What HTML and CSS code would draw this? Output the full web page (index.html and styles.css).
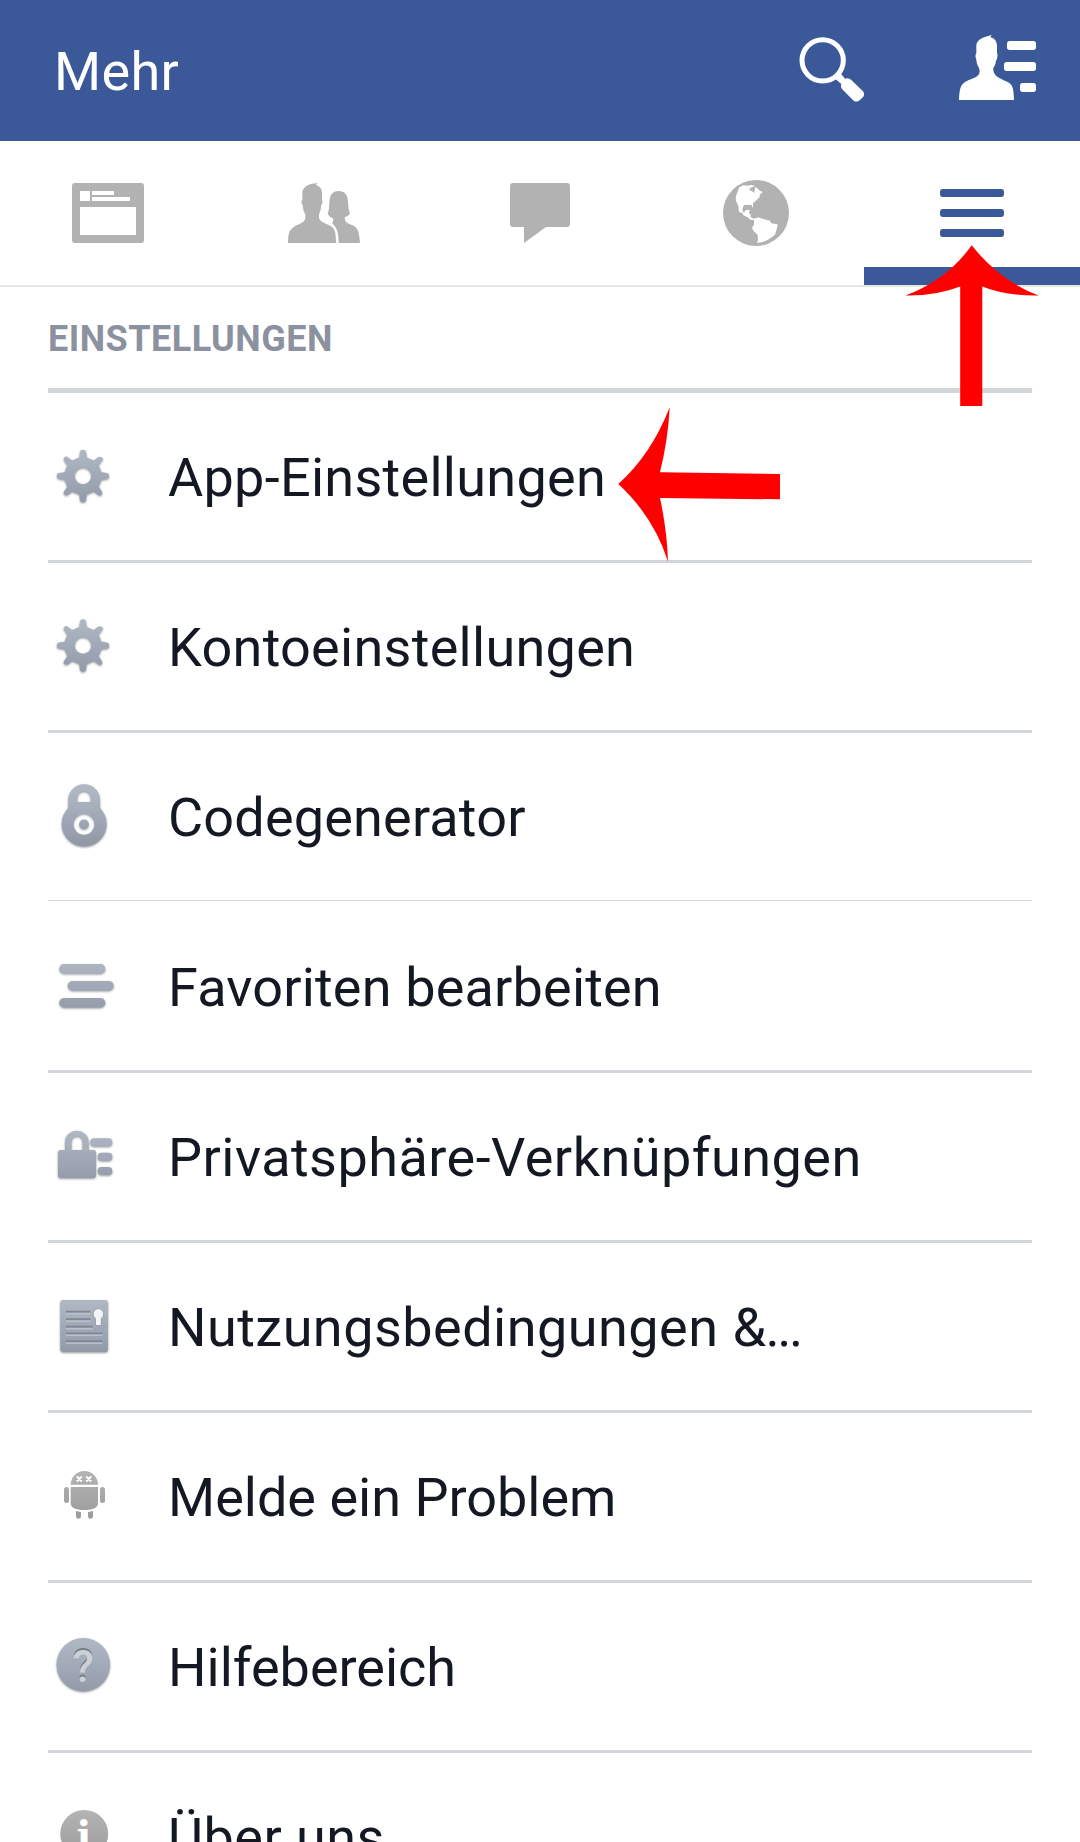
FILE: index.html
```html
<!DOCTYPE html>
<html lang="de">
<head>
<meta charset="utf-8">
<title>Mehr</title>
<link rel="stylesheet" href="styles.css">
</head>
<body>
<svg class="defs" width="0" height="0" aria-hidden="true">
  <defs>
    <linearGradient id="steel" gradientUnits="userSpaceOnUse" x1="0" y1="8" x2="0" y2="62">
      <stop offset="0" stop-color="#afb8c2"/><stop offset=".55" stop-color="#a0a8b7"/><stop offset="1" stop-color="#9299a6"/>
    </linearGradient>
    <linearGradient id="gray" gradientUnits="userSpaceOnUse" x1="0" y1="8" x2="0" y2="58">
      <stop offset="0" stop-color="#b4b4b4"/><stop offset="1" stop-color="#9b9b9b"/>
    </linearGradient>
    <mask id="hub" maskUnits="userSpaceOnUse" x="0" y="0" width="72" height="72">
      <rect width="72" height="72" fill="#fff"/><circle cx="35" cy="35" r="8.300"/>
    </mask>
    <path id="gear" mask="url(#hub)" d="M31.300 16.500L32 11Q32.300 8.800 35 8.800T38 11L38.700 16.500L45.800 19.400L50.200 16.200Q52.200 15 54 16.500T53.800 19.800L50.600 24.200L53.500 31.300L59 32Q61.200 32.300 61.200 35T59 38L53.500 38.700L50.600 45.800L53.800 50.200Q55 52.200 53.500 53.800T50.200 53.800L45.800 50.600L38.700 53.500L38 59Q37.700 61.200 35 61.200T32 59L31.300 53.500L24.200 50.600L19.800 53.800Q17.800 55 16.300 53.500T16.200 50.200L19.400 45.800L16.500 38.700L11 38Q8.800 37.700 8.800 35T11 32L16.500 31.300L19.400 24.200L16.200 19.800Q15 17.800 16.500 16.300T19.800 16.200L24.200 19.400z"/>
  </defs>
</svg>
<div class="screen">
  <header class="bar">
    <h1 class="title">Mehr</h1>
    <svg class="search" viewBox="116 109 198 195">
      <circle cx="187" cy="179" r="62" fill="none" stroke="#fff" stroke-width="15"/>
      <path fill="#fff" d="M226 236L242 219L254 234Q266 231 273 238L308 272Q314 280 309 288L298 299Q289 306 280 300L245 265Q240 258 243 250z"/>
    </svg>
    <svg class="contacts" viewBox="597 105 234 195" fill="#fff">
      <path d="M597 300C598 270 601 258 611 249C624 238 655 234 658 220Q660 212 657 203C651 195 650 187 649 180Q645 173 647 163L649 160V138C649 122 664 112 695 105L691 112C704 115 711 123 711 140V160Q714 163 712 170Q712 178 708 182C707 192 704 198 700 203V212C704 234 732 238 748 249C760 258 761 272 762 300z"/>
      <rect x="741" y="123" width="87" height="27" rx="8"/><rect x="732" y="186" width="96" height="27" rx="8"/><rect x="780" y="249" width="48" height="27" rx="8"/>
    </svg>
  </header>
  <nav class="tabs">
    <div class="tab"><svg width="72" height="60" viewBox="0 0 72 60"><path fill-rule="evenodd" d="M3 0H69Q72 0 72 3V57Q72 60 69 60H3Q0 60 0 57V3Q0 0 3 0zM8 8V18H18V8zM20 8V12H42V8zM20 14V18H58V14zM8 24V52H64V24z"/></svg></div>
    <div class="tab"><svg width="72" height="60" viewBox="864 549 216 180">
      <path d="M864 729C865 700 867 692 880 682C895 672 914 669 916 655V643C909 632 909 622 908 615C903 610 903 603 907 600V578C907 562 924 551 952 549L948 555C960 558 966 568 966 582V600C969 603 968 612 964 615Q963 632 957 643V655C962 669 986 672 997 682C1006 690 1008 705 1008 729z"/>
      <path d="M1016 729C1016 705 1012 688 1004 678Q998 672 996 669Q1002 665 999 655Q988 651 983 642Q988 630 988 610C988 582 1000 573 1016 573C1034 573 1043 585 1044 605Q1045 630 1050 641Q1045 648 1034 652Q1034 664 1042 669C1055 675 1068 678 1073 690Q1078 702 1080 729z"/>
    </svg></div>
    <div class="tab"><svg width="60" height="60" viewBox="0 0 60 60"><path d="M3 0H57Q60 0 60 3V41Q60 44 57 44H36L14 60V44H3Q0 44 0 41V3Q0 0 3 0z"/></svg></div>
    <div class="tab"><svg width="66" height="66" viewBox="129 60 198 198">
      <circle cx="228" cy="159" r="99"/>
      <path fill="#fff" d="M178 82L190 76L202 77L215 75L225 78L210 84L208 90L220 96L223 99L225 82L231 83L240 93L248 95L244 101L239 103L239 111L228 122L219 130V144L214 134L192 135L188 144V154L192 158L196 151L205 149L210 151L206 160L212 163V172L222 176L234 172L250 177L270 182L274 190L293 193C293 204 288 212 285 224C268 238 252 248 231 248L234 240L233 225L220 212L216 203L222 194V180L211 179L203 172L190 166L187 160L177 155L175 138L168 123Q166 108 171 100z"/>
    </svg></div>
    <div class="tab active"><svg width="64" height="48" viewBox="0 0 64 48"><rect width="64" height="8" rx="3"/><rect y="20" width="64" height="8" rx="3"/><rect y="40" width="64" height="8" rx="3"/></svg></div>
  </nav>
  <main class="list">
    <h2 class="section">EINSTELLUNGEN</h2>
    <div class="row"><svg class="icon" viewBox="0 0 72 71"><use href="#gear"/></svg><span class="label wide">App-Einstellungen</span></div>
    <div class="row"><svg class="icon" viewBox="0 0 72 71"><use href="#gear" y="-.5"/></svg><span class="label wide">Kontoeinstellungen</span></div>
    <div class="row hairline"><svg class="icon" viewBox="0 0 72 71">
      <path fill-rule="evenodd" d="M20.300 27V18A15.900 15.900 0 0 1 52 18V27A22.500 22.500 0 1 1 20.300 27zM29.300 21H42.700V17A6.700 6.700 0 0 0 29.300 17zM36 32.800a10.500 10.500 0 1 0 .01 0z"/><circle cx="36" cy="43.300" r="4.800"/>
    </svg><span class="label open">Codegenerator</span></div>
    <div class="row"><svg class="icon" viewBox="0 0 72 71"><rect x="11.300" y="13" width="46" height="9.500" rx="4.700"/><rect x="19.700" y="30" width="46" height="9.500" rx="4.700"/><rect x="11.300" y="47" width="46" height="9.500" rx="4.700"/></svg><span class="label open">Favoriten bearbeiten</span></div>
    <div class="row"><svg class="icon" viewBox="0 0 72 71">
      <path fill-rule="evenodd" d="M10 32Q10 29 13 29H17V21.500A11.800 11.800 0 0 1 40.700 21.500V29H45Q48 29 48 32V54Q48 57 45 57H13Q10 57 10 54zM23.500 29H34.500V21Q34 15.300 29 15.300T23.500 21z"/>
      <rect x="42.300" y="17.300" width="22" height="8" rx="4"/><rect x="49.700" y="31.700" width="14.600" height="8" rx="4"/><rect x="49.700" y="46" width="14.600" height="8" rx="4"/>
    </svg><span class="label wider">Privatsphäre-Verknüpfungen</span></div>
    <div class="row"><svg class="icon" viewBox="0 0 72 71">
      <rect x="12.300" y="9" width="47.700" height="52" rx="3"/>
      <path fill="none" stroke="#7e8796" stroke-width="1.800" d="M18 20.700H42.300M18 28.200H42.300M18 35.700H44.700M18 42.300H54.300M18 50.200H54.300"/>
      <path fill="none" stroke="#b9c0ca" stroke-width="1.500" d="M18 22.700H42.300M18 30.200H42.300M18 37.700H44.700M18 44.300H54.300M18 52.200H54.300"/>
      <path fill="#f4f5f6" stroke="#8b94a1" stroke-width=".8" d="M50.300 17.500a5.500 5.500 0 0 1 3 10V34.500H47.500V27.500a5.500 5.500 0 0 1 2.800-10z"/>
    </svg><span class="label wider">Nutzungsbedingungen &amp;<span class="dots">...</span></span></div>
    <div class="row"><svg class="icon flat" viewBox="0 0 72 71">
      <path d="M22.700 23.700A13.600 13.600 0 0 1 50 23.700zM22.700 26H50V42Q50 49 36.300 49T22.700 42z"/>
      <rect x="16" y="26" width="5" height="16" rx="2.500"/><rect x="52" y="26" width="5" height="16" rx="2.500"/>
      <path d="M28 50L33 51V55.500Q33 57.700 30.500 57.700T28 55.500zM45 50L40 51V55.500Q40 57.700 42.500 57.700T45 55.500z"/>
      <path fill="none" stroke="#fff" stroke-width="1.900" d="M28.800 15.500L33.800 20.500M33.800 15.500L28.800 20.500M38.200 15.500L43.200 20.500M43.200 15.500L38.200 20.500"/>
    </svg><span class="label">Melde ein Problem</span></div>
    <div class="row"><svg class="icon disc" viewBox="0 0 72 71"><circle cx="35.300" cy="33.700" r="26.700"/><text class="mark shade" x="35.300" y="49">?</text><text class="mark" x="35.300" y="50.500">?</text></svg><span class="label">Hilfebereich</span></div>
    <div class="row"><svg class="icon flat" viewBox="0 0 72 71"><circle cx="36.200" cy="33" r="24"/><text class="info" x="36" y="48">i</text></svg><span class="label wider">Über uns</span></div>
  </main>
  <svg class="arrows" viewBox="0 0 1080 1842" fill="#f00" aria-hidden="true">
    <path d="M971.700 245.300Q1000 281 1038.700 295.500Q1006 296 982.300 286.500V406H960.200V286.500Q936 296 905.500 295.500Q947 280 971.700 245.300z"/>
    <path d="M618.300 484Q651 455 669.700 407.300Q668 440 660 472.300L780 474V499.300L660 498Q667 530 668 561.700Q654 517 618.300 484z"/>
  </svg>
</div>
</body>
</html>
```
FILE: styles.css
```css
* { box-sizing: border-box; }
body { margin: 0; background: #fff; font-family: Roboto, "Liberation Sans", sans-serif; }
.defs { position: absolute; }
.screen { position: relative; height: 1842px; overflow: hidden; }
.bar { display: flex; align-items: center; height: 141px; padding: 0 43px 0 54px; background: #3b5998; color: #fff; }
.title { flex: 1; margin: 0; padding-top: 2px; font-size: 54px; font-weight: 400; line-height: 63px; letter-spacing: .3px; }
.search { width: 66px; height: 65px; margin: 0 94px 3px 0; }
.contacts { width: 78px; height: 65px; margin-bottom: 6px; }
.tabs { display: grid; grid-template-columns: repeat(5, 1fr); height: 146px; border-bottom: 2px solid #e5e5e5; fill: #b2b2b2; }
.tab { display: flex; align-items: center; justify-content: center; }
.tab.active { fill: #3b5998; box-shadow: inset 0 -18px #3b5998; }
.list { padding: 0 48px; }
.section { height: 106px; margin: 0; padding-top: 31px; border-bottom: 5px solid #d2d6db; color: #8b919f; font-size: 36px; font-weight: 700; line-height: 42px; letter-spacing: .48px; }
.row { display: flex; align-items: center; gap: 48px; height: 170px; border-bottom: 3px solid #d2d6db; }
.row.hairline { border-bottom-width: 1px; height: 168px; margin-bottom: 2px; }
.icon { flex: none; width: 72px; height: 71px; overflow: visible; fill: url(#steel); filter: drop-shadow(0 1px 1px rgba(60, 65, 75, .55)); }
.icon.flat { fill: url(#gray); filter: none; }
.label { padding-top: 2px; color: #141823; font-size: 54px; line-height: 63px; white-space: nowrap; }
.label.open { letter-spacing: .18px; }
.label.wide { letter-spacing: .28px; }
.label.wider { letter-spacing: .47px; }
.dots { margin-left: -1px; letter-spacing: -2.5px; }
.mark { fill: #cdd1d6; font: 500 44px Roboto, sans-serif; text-anchor: middle; }
.mark.shade { fill: #757d89; }
.info { fill: #fff; font: 700 39px "DejaVu Serif", serif; text-anchor: middle; }
.arrows { position: absolute; top: 0; left: 0; width: 1080px; height: 1842px; pointer-events: none; }
```
